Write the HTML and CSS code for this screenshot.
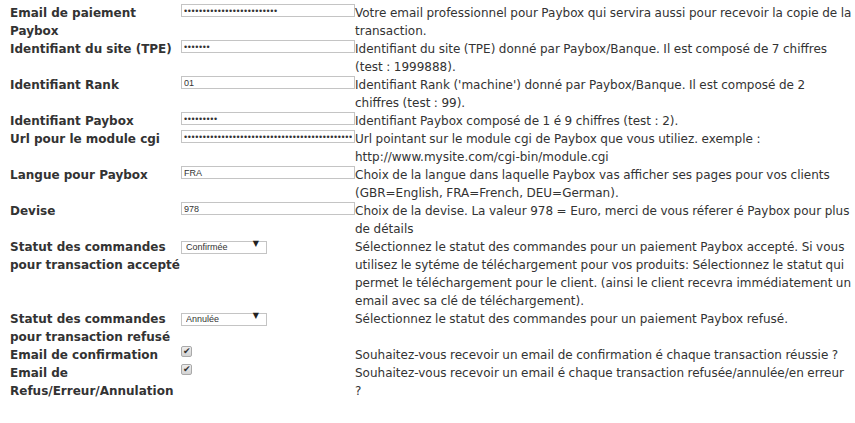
FILE: index.html
```html
<!DOCTYPE html>
<html lang="fr">
<head>
  <meta charset="UTF-8" />
  <title>Paybox</title>
  <link rel="stylesheet" href="styles.css">
</head>
<body>
  <div class="settings">
    <div class="label">Email de paiement Paybox</div>
    <div class="field"><input type="password" value="abcdefghijklmnopqrstuvwxy"></div>
    <div class="help">Votre email professionnel pour Paybox qui servira aussi pour recevoir la copie de la transaction.</div>

    <div class="label">Identifiant du site (TPE)</div>
    <div class="field"><input type="password" value="1999888"></div>
    <div class="help">Identifiant du site (TPE) donné par Paybox/Banque. Il est composé de 7 chiffres (test : 1999888).</div>

    <div class="label">Identifiant Rank</div>
    <div class="field"><input type="text" value="01"></div>
    <div class="help">Identifiant Rank ('machine') donné par Paybox/Banque. Il est composé de 2<br>chiffres (test : 99).</div>

    <div class="label">Identifiant Paybox</div>
    <div class="field"><input type="password" value="123456789"></div>
    <div class="help">Identifiant Paybox composé de 1 é 9 chiffres (test : 2).</div>

    <div class="label">Url pour le module cgi</div>
    <div class="field"><input type="password" value="http://www.monsite-de-paiement.com/cgi-bin/paybox/modulev3.cgi"></div>
    <div class="help">Url pointant sur le module cgi de Paybox que vous utiliez. exemple : http://www.mysite.com/cgi-bin/module.cgi</div>

    <div class="label">Langue pour Paybox</div>
    <div class="field"><input type="text" value="FRA"></div>
    <div class="help">Choix de la langue dans laquelle Paybox vas afficher ses pages pour vos clients (GBR=English, FRA=French, DEU=German).</div>

    <div class="label">Devise</div>
    <div class="field"><input type="text" value="978"></div>
    <div class="help">Choix de la devise. La valeur 978 = Euro, merci de vous réferer é Paybox pour plus de détails</div>

    <div class="label">Statut des commandes pour transaction accepté</div>
    <div class="field">
      <span class="select-wrap">
        <select><option>Confirmée</option><option>Annulée</option></select>
      </span>
    </div>
    <div class="help">Sélectionnez le statut des commandes pour un paiement Paybox accepté. Si vous utilisez le sytéme de téléchargement pour vos produits: Sélectionnez le statut qui permet le téléchargement pour le client. (ainsi le client recevra immédiatement un email avec sa clé de téléchargement).</div>

    <div class="label">Statut des commandes pour transaction refusé</div>
    <div class="field">
      <span class="select-wrap">
        <select><option>Annulée</option><option>Confirmée</option></select>
      </span>
    </div>
    <div class="help">Sélectionnez le statut des commandes pour un paiement Paybox refusé.</div>

    <div class="label">Email de confirmation</div>
    <div class="field"><input type="checkbox" checked></div>
    <div class="help">Souhaitez-vous recevoir un email de confirmation é chaque transaction réussie ?</div>

    <div class="label">Email de Refus/Erreur/Annulation</div>
    <div class="field"><input type="checkbox" checked></div>
    <div class="help">Souhaitez-vous recevoir un email é chaque transaction refusée/annulée/en erreur<br>?</div>
  </div>
</body>
</html>
```

FILE: styles.css
```css
html, body {
  margin: 0;
  padding: 0;
  background: #ffffff;
}
body {
  padding: 4px 0 4px 8px;
  font-family: "DejaVu Sans", Verdana, sans-serif;
  font-size: 12px;
  line-height: 18px;
  color: #333333;
}
.settings {
  display: grid;
  grid-template-columns: 173px 174px 1fr;
}
.label {
  padding-left: 2px;
  font-weight: bold;
}
.help {
  word-spacing: -0.3px;
}
.field input[type="text"],
.field input[type="password"] {
  box-sizing: border-box;
  width: 174px;
  height: 13px;
  margin: 0;
  padding: 0 2px;
  border: 1px solid #c4c4c4;
  font-family: "Liberation Sans", Arial, sans-serif;
  font-size: 9px;
  color: #333333;
  vertical-align: top;
}
.field input[type="password"] {
  letter-spacing: 0.6px;
}
.select-wrap {
  position: relative;
  display: inline-block;
  vertical-align: top;
  margin-top: -1px;
}
.select-wrap::after {
  content: "\25BC";
  position: absolute;
  right: 8px;
  top: 0;
  font-family: "DejaVu Sans", sans-serif;
  font-size: 8px;
  line-height: 13px;
  color: #222222;
  pointer-events: none;
}
.select-wrap select {
  appearance: none;
  box-sizing: border-box;
  width: 86px;
  height: 13px;
  margin: 0;
  padding: 0 4px;
  border: 1px solid #c4c4c4;
  background: #ffffff;
  font-family: "Liberation Sans", Arial, sans-serif;
  font-size: 9px;
  line-height: 11px;
  color: #333333;
}
.field input[type="checkbox"] {
  appearance: none;
  position: relative;
  box-sizing: border-box;
  width: 11px;
  height: 11px;
  margin: 0;
  border: 1px solid #a9a9a9;
  border-radius: 2px;
  background: linear-gradient(#ededed, #d3d3d3);
  vertical-align: top;
}
.field input[type="checkbox"]:checked::after {
  content: "\2714";
  position: absolute;
  left: 1px;
  top: -2px;
  font-size: 9px;
  line-height: 12px;
  color: #333333;
}
```
